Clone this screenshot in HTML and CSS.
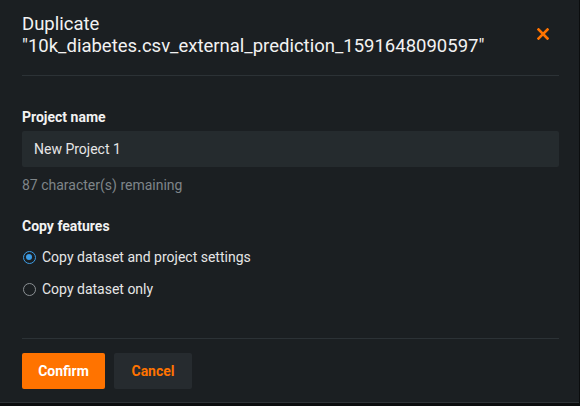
FILE: index.html
```html
<!DOCTYPE html>
<html>
<head>
<meta charset="utf-8">
<link rel="stylesheet" href="styles.css">
</head>
<body>
<div class="modal">
  <div class="header">
    <div class="title">Duplicate<br>"10k_diabetes.csv_external_prediction_1591648090597"</div>
    <button class="close" aria-label="Close">
      <svg width="12" height="12" viewBox="0 0 12 12"><path d="M1.5 1.5 L10.5 10.5 M10.5 1.5 L1.5 10.5" stroke="#ff7300" stroke-width="2.6" stroke-linecap="square"/></svg>
    </button>
  </div>
  <div class="body">
    <div class="label">Project name</div>
    <div class="input">New Project 1</div>
    <div class="helper">87 character(s) remaining</div>
    <div class="label second">Copy features</div>
    <div class="radio-row first"><span class="radio checked"></span><span>Copy dataset and project settings</span></div>
    <div class="radio-row"><span class="radio"></span><span>Copy dataset only</span></div>
  </div>
  <div class="footer">
    <button class="btn primary">Confirm</button>
    <button class="btn secondary">Cancel</button>
  </div>
</div>
</body>
</html>
```

FILE: styles.css
```css
html, body {
  margin: 0;
  padding: 0;
  background: #0b0d0e;
}
body {
  font-family: Roboto, "Liberation Sans", sans-serif;
  width: 580px;
  height: 406px;
  overflow: hidden;
}
.modal {
  width: 579px;
  height: 403px;
  background: #1b1f22;
  border-bottom: 1px solid #2e3337;
  box-sizing: border-box;
  padding: 0 20px 0 22px;
  display: flex;
  flex-direction: column;
}
.header {
  display: flex;
  justify-content: space-between;
  align-items: flex-start;
  padding-top: 13px;
  padding-bottom: 18px;
  border-bottom: 1px solid #2c3236;
}
.title {
  color: #f2f2f2;
  font-size: 18.5px;
  font-weight: 400;
  line-height: 22px;
}
.close {
  background: none;
  border: none;
  padding: 0;
  margin-top: 15px;
  margin-right: 10px;
  width: 12px;
  height: 12px;
  display: flex;
}
.body {
  padding-top: 31px;
  display: flex;
  flex-direction: column;
}
.label {
  color: #f2f2f2;
  font-size: 14px;
  font-weight: 700;
  line-height: 20px;
}
.label.second {
  margin-top: 22px;
}
.input {
  margin-top: 4px;
  height: 36px;
  background: #252b2e;
  border-radius: 2px;
  color: #e6e6e6;
  font-size: 14px;
  line-height: 36px;
  padding: 0 12px;
}
.helper {
  margin-top: 9px;
  color: #7f8589;
  font-size: 14px;
  line-height: 18px;
}
.radio-row {
  display: flex;
  align-items: center;
  gap: 6px;
  color: #e6e6e6;
  font-size: 14px;
  line-height: 20px;
  margin-top: 12px;
}
.radio-row.first {
  margin-top: 11px;
}
.radio {
  width: 13px;
  height: 13px;
  border-radius: 50%;
  border: 1.5px solid #8b9094;
  box-sizing: border-box;
  margin-left: 1px;
  position: relative;
}
.radio.checked {
  border-color: #3d9de6;
}
.radio.checked::after {
  content: "";
  position: absolute;
  left: 2px;
  top: 2px;
  width: 6px;
  height: 6px;
  border-radius: 50%;
  background: #3d9de6;
}
.footer {
  margin-top: 39px;
  border-top: 1px solid #2c3236;
  padding-top: 14px;
  display: flex;
  gap: 9px;
}
.btn {
  height: 36px;
  border: none;
  border-radius: 2px;
  font-family: Roboto, "Liberation Sans", sans-serif;
  font-size: 14px;
  font-weight: 700;
  padding: 0;
}
.primary {
  width: 83px;
  background: #ff7300;
  color: #ffffff;
}
.secondary {
  width: 78px;
  background: #262b2f;
  color: #ff7300;
}
```
